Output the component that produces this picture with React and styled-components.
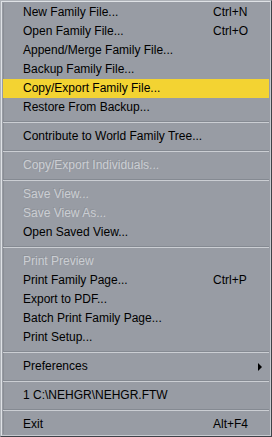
import React from "react";
import styled, { createGlobalStyle } from "styled-components";

const Global = createGlobalStyle`
  html, body { margin: 0; padding: 0; background: #989ca4; }
  body { font-family: "Liberation Sans", Arial, sans-serif; }
`;

const Menu = styled.div`
  width: 272px;
  height: 437px;
  box-sizing: border-box;
  border: 1px solid;
  border-color: #aeb2b8 #3e4248 #3e4248 #aeb2b8;
  background: #989ca4;
`;

const Bevel = styled.div`
  height: 100%;
  box-sizing: border-box;
  border: 1px solid;
  border-color: #dfe2e6 #c6cacf #c6cacf #dfe2e6;
  padding: 1px;
`;

const List = styled.ul`
  list-style: none;
  margin: 0;
  padding: 0;
  height: 100%;
  box-shadow: inset 1px 0 0 #8a8e95;
`;

const Item = styled.li`
  display: grid;
  grid-template-columns: 190px 1fr auto;
  align-items: center;
  height: 19px;
  padding: 0 7px 0 20px;
  font-size: 12px;
  line-height: 19px;
  white-space: nowrap;
  color: ${(p) => (p.$disabled ? "#cbced3" : "#000")};
  text-shadow: ${(p) => (p.$disabled ? "-1px -1px 0 rgba(120,124,130,0.35)" : "none")};
  background: ${(p) => (p.$active ? "#f3d332" : "transparent")};
`;

const Shortcut = styled.span``;

const Arrow = styled.span`
  width: 0;
  height: 0;
  border-top: 4px solid transparent;
  border-bottom: 4px solid transparent;
  border-left: 4px solid #000;
`;

const Separator = styled.li`
  height: 10px;
  display: flex;
  flex-direction: column;
  justify-content: center;
  &::before,
  &::after {
    content: "";
    display: block;
    height: 1px;
  }
  &::before { background: #858a92; }
  &::after { background: #cbced3; }
`;

const items = [
  { label: "New Family File...", sc: "Ctrl+N" },
  { label: "Open Family File...", sc: "Ctrl+O" },
  { label: "Append/Merge Family File..." },
  { label: "Backup Family File..." },
  { label: "Copy/Export Family File...", active: true },
  { label: "Restore From Backup..." },
  { sep: true },
  { label: "Contribute to World Family Tree..." },
  { sep: true },
  { label: "Copy/Export Individuals...", disabled: true },
  { sep: true },
  { label: "Save View...", disabled: true },
  { label: "Save View As...", disabled: true },
  { label: "Open Saved View..." },
  { sep: true },
  { label: "Print Preview", disabled: true },
  { label: "Print Family Page...", sc: "Ctrl+P" },
  { label: "Export to PDF..." },
  { label: "Batch Print Family Page..." },
  { label: "Print Setup..." },
  { sep: true },
  { label: "Preferences", sub: true },
  { sep: true },
  { label: "1 C:\\NEHGR\\NEHGR.FTW" },
  { sep: true },
  { label: "Exit", sc: "Alt+F4" },
];

export default function App() {
  return (
    <>
      <Global />
      <Menu>
        <Bevel>
          <List>
            {items.map((it, i) =>
              it.sep ? (
                <Separator key={i} />
              ) : (
                <Item key={i} $active={it.active} $disabled={it.disabled}>
                  <span>{it.label}</span>
                  <Shortcut>{it.sc || ""}</Shortcut>
                  {it.sub ? <Arrow /> : <span />}
                </Item>
              )
            )}
          </List>
        </Bevel>
      </Menu>
    </>
  );
}
